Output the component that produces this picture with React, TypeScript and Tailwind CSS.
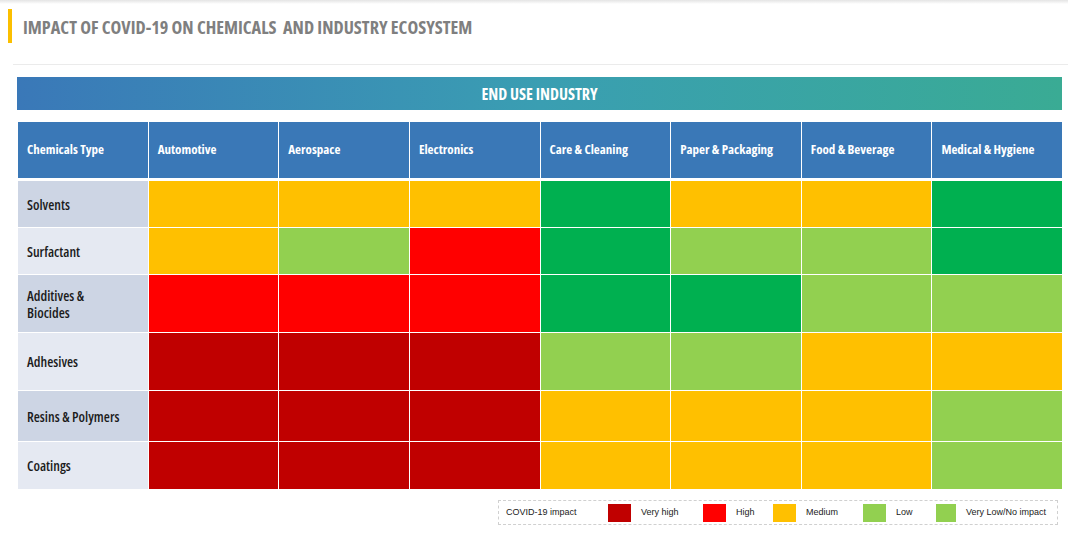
const O = "bg-[#ffc000]";
const G = "bg-[#00b050]";
const L = "bg-[#92d050]";
const R = "bg-[#ff0000]";
const D = "bg-[#c00000]";

const industries = [
  "Automotive",
  "Aerospace",
  "Electronics",
  "Care & Cleaning",
  "Paper & Packaging",
  "Food & Beverage",
  "Medical & Hygiene",
];

const rows = [
  { name: "Solvents", h: "h-[46px]", side: "bg-[#cdd5e4]", cells: [O, O, O, G, O, O, G] },
  { name: "Surfactant", h: "h-[46px]", side: "bg-[#e5e9f2]", cells: [O, L, R, G, L, L, G] },
  { name: "Additives & Biocides", h: "h-[57px]", side: "bg-[#cdd5e4]", cells: [R, R, R, G, G, L, L] },
  { name: "Adhesives", h: "h-[57px]", side: "bg-[#e5e9f2]", cells: [D, D, D, L, L, O, O] },
  { name: "Resins & Polymers", h: "h-[50px]", side: "bg-[#cdd5e4]", cells: [D, D, D, O, O, O, L] },
  { name: "Coatings", h: "h-[47px]", side: "bg-[#e5e9f2]", cells: [D, D, D, O, O, O, L] },
];

const legend = [
  { label: "Very high", color: D, w: "w-[95px]" },
  { label: "High", color: R, w: "w-[70px]" },
  { label: "Medium", color: O, w: "w-[90px]" },
  { label: "Low", color: L, w: "w-[73px]" },
  { label: "Very Low/No impact", color: L, w: "w-[110px]" },
];

const narrow = "font-['Open_Sans',sans-serif] font-stretch-condensed";

export default function App() {
  return (
    <div className={`w-[1068px] h-[535px] bg-white overflow-hidden ${narrow}`}>
      <div className="h-[4px] bg-gradient-to-b from-[#e4e4e4] to-white" />

      {/* title */}
      <div className="flex items-center h-[34px] mt-[5px] pl-[8px]">
        <div className="w-[4px] h-[34px] bg-[#fbbf00]" />
        <h1 className="ml-[11px] mt-[4px] text-[18.2px] font-bold text-[#7f7f7f] whitespace-pre">
          IMPACT OF COVID-19 ON CHEMICALS  AND INDUSTRY ECOSYSTEM
        </h1>
      </div>

      <div className="ml-[13px] mt-[21px] h-px bg-[#ebebeb]" />

      {/* banner */}
      <div className="ml-[17px] mr-[6px] mt-[12px] h-[33px] flex items-center justify-center bg-gradient-to-r from-[#3a78b8] via-[#3a9eb2] to-[#3aab94]">
        <span className="text-white text-[16px] font-bold">END USE INDUSTRY</span>
      </div>

      {/* table */}
      <div className="ml-[18px] mr-[6px] mt-[12px]">
        <div className="grid grid-cols-8 gap-x-[1px] h-[56px]">
          <div className="bg-[#3a78b7] flex items-center pl-[9px] text-white text-[13px] font-bold whitespace-nowrap">
            Chemicals Type
          </div>
          {industries.map((ind) => (
            <div key={ind} className="bg-[#3a78b7] flex items-center pl-[9px] text-white text-[13px] font-bold whitespace-nowrap">
              {ind}
            </div>
          ))}
        </div>
        <div className="flex flex-col gap-y-[1px] mt-[3px]">
          {rows.map((r) => (
            <div key={r.name} className={`grid grid-cols-8 gap-x-[1px] ${r.h}`}>
              <div className={`${r.side} flex items-center pl-[9px] pr-[24px] text-[14px] leading-[17px] text-[#1c1c1c] font-semibold`}>
                {r.name}
              </div>
              {r.cells.map((c, i) => (
                <div key={i} className={c} />
              ))}
            </div>
          ))}
        </div>
      </div>

      {/* legend */}
      <div className="ml-[498px] mr-[10px] mt-[11px] h-[25px] border border-dashed border-[#d0d0d0] flex items-center pl-[7px] font-['Liberation_Sans',sans-serif] font-stretch-normal text-[9px] text-[#222] whitespace-nowrap">
        <span className="w-[102px]">COVID-19 impact</span>
        {legend.map((l) => (
          <div key={l.label} className={`flex items-center ${l.w}`}>
            <div className={`w-[23px] h-[18px] ${l.color}`} />
            <span className="ml-[10px]">{l.label}</span>
          </div>
        ))}
      </div>
    </div>
  );
}
